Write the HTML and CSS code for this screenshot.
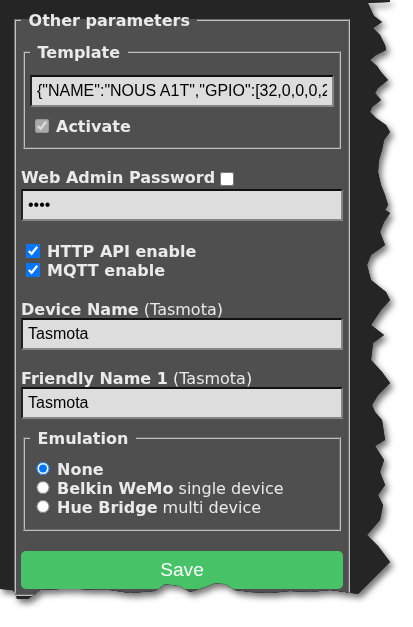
FILE: index.html
```html
<!DOCTYPE html>
<html lang="en">
<head>
  <meta charset="UTF-8" />
  <meta name="viewport" content="width=device-width, initial-scale=1.0" />
  <title>Other parameters - Tasmota</title>
  <link rel="stylesheet" href="styles.css">
</head>
<body>
  <div class="shot">
    <div class="paper">
      <fieldset class="box main">
        <legend><b>&nbsp;Other parameters&nbsp;</b></legend>
        <form>
          <fieldset class="box sub tpl">
            <legend><b>&nbsp;Template&nbsp;</b></legend>
            <input class="field tpl-field" value='{"NAME":"NOUS A1T","GPIO":[32,0,0,0,2720,2656,0,0,2624,32,0,224,0,0],"FLAG":0,"BASE":49}'>
            <label class="row act"><input type="checkbox" checked disabled><b>Activate</b></label>
          </fieldset>

          <label class="row lbl wap"><b>Web Admin Password</b><input type="checkbox"></label>
          <input class="field pw" type="password" value="****">

          <label class="row http"><input type="checkbox" checked><b>HTTP API enable</b></label>
          <label class="row"><input type="checkbox" checked><b>MQTT enable</b></label>

          <label class="row lbl dev"><b>Device Name</b> (Tasmota)</label>
          <input class="field" value="Tasmota">

          <label class="row lbl fn"><b>Friendly Name 1</b> (Tasmota)</label>
          <input class="field" value="Tasmota">

          <fieldset class="box sub emu">
            <legend><b>&nbsp;Emulation&nbsp;</b></legend>
            <label class="row first"><input type="radio" name="emu" checked><b>None</b></label>
            <label class="row"><input type="radio" name="emu"><b>Belkin WeMo</b> single device</label>
            <label class="row last"><input type="radio" name="emu"><b>Hue Bridge</b> multi device</label>
          </fieldset>

          <button type="button" class="save">Save</button>
        </form>
      </fieldset>
    </div>
  </div>
</body>
</html>
```

FILE: styles.css
```css
* {
  box-sizing: border-box;
}
body {
  margin: 0;
  background: #ffffff;
  font-family: "DejaVu Sans", Verdana, sans-serif;
  font-size: 16px;
}

/* torn screenshot edge */
.shot {
  width: 413px;
  height: 627px;
  filter: drop-shadow(0 0 0.6px #222) drop-shadow(3px 4px 3px rgba(0, 0, 0, 0.55));
}
.paper {
  width: 413px;
  height: 627px;
  background: #252525;
  color: #eaeaea;
  padding: 10px 0 0 14px;
  clip-path: polygon(0px 0px, 390px 0px, 390px 2px, 368px 3px, 371px 10px, 374px 16px, 382px 22px, 373px 28px, 380px 35px, 385px 45px, 386px 50px, 376px 55px, 370px 60px, 377px 66px, 381px 72px, 388px 80px, 378px 88px, 375px 93px, 381px 100px, 372px 107px, 370px 112px, 376px 118px, 386px 125px, 390px 132px, 384px 140px, 382px 150px, 379px 160px, 378px 172px, 381px 185px, 385px 195px, 388px 205px, 385px 210px, 390px 213px, 384px 222px, 380px 232px, 385px 245px, 371px 255px, 367px 265px, 371px 280px, 386px 292px, 390px 300px, 381px 310px, 371px 325px, 384px 335px, 373px 343px, 371px 360px, 382px 372px, 390px 383px, 378px 395px, 372px 405px, 375px 412px, 382px 420px, 385px 440px, 375px 446px, 384px 460px, 380px 472px, 385px 485px, 378px 495px, 383px 505px, 380px 520px, 367px 535px, 378px 546px, 390px 562px, 382px 570px, 372px 580px, 362px 590px, 358px 594px, 345px 592px, 330px 590px, 310px 592px, 290px 591px, 270px 593px, 250px 592px, 235px 590px, 225px 584px, 215px 583px, 205px 587px, 190px 592px, 180px 586px, 165px 584px, 155px 591px, 130px 593px, 110px 590px, 95px 590px, 80px 589px, 60px 589px, 40px 590px, 32px 596px, 28px 599px, 17px 599px, 15px 592px, 12px 590px, 0px 589px);
}

/* fieldsets */
.box {
  background: #4f4f4f;
  border: 2px groove #c0c0c0;
  padding: 5px;
}
.box legend {
  padding: 3px 2px 0;
  line-height: 16px;
}
.main {
  width: 336px;
  margin: 0;
}
.sub {
  margin: 0 2px;
}
.tpl {
  margin-top: 8px;
}
.emu {
  margin-top: 9px;
}

/* rows */
.row {
  display: block;
  line-height: 19px;
  white-space: nowrap;
}
.row.lbl {
  line-height: 17px;
}
.act {
  margin: 10px 0 6px;
}
.wap {
  margin-top: 20px;
}
.http {
  margin-top: 21px;
}
.dev {
  margin-top: 21px;
}
.fn {
  margin-top: 20px;
}
.emu .first {
  margin-top: 8px;
}
.emu .last {
  margin-bottom: 7px;
}

input[type=checkbox],
input[type=radio] {
  width: 16px;
  height: 14px;
  margin: 0 6px 0 4px;
  vertical-align: -1px;
}
input[type=radio] {
  height: 13px;
  margin-left: 5px;
  vertical-align: 0;
}
.wap input[type=checkbox] {
  margin-left: 4px;
  vertical-align: -3px;
}

/* text inputs */
.field {
  display: block;
  width: 100%;
  padding: 5px;
  font-family: "Liberation Sans", Arial, sans-serif;
  font-size: 16px;
  background: #dddddd;
  color: #000000;
  border: 2px solid;
  border-color: #111111 #858585 #858585 #222222;
}
.tpl-field {
  margin-top: 9px;
}
.pw {
  margin-top: 3px;
}

/* save button */
.save {
  display: block;
  width: 100%;
  margin-top: 20px;
  padding: 0;
  border: 0;
  border-radius: 0.3rem;
  background: #47c266;
  color: #faffff;
  font-family: "Liberation Sans", Arial, sans-serif;
  font-size: 1.2rem;
  line-height: 2.4rem;
  cursor: pointer;
}
.save:hover {
  background: #5aaf6f;
}
```
